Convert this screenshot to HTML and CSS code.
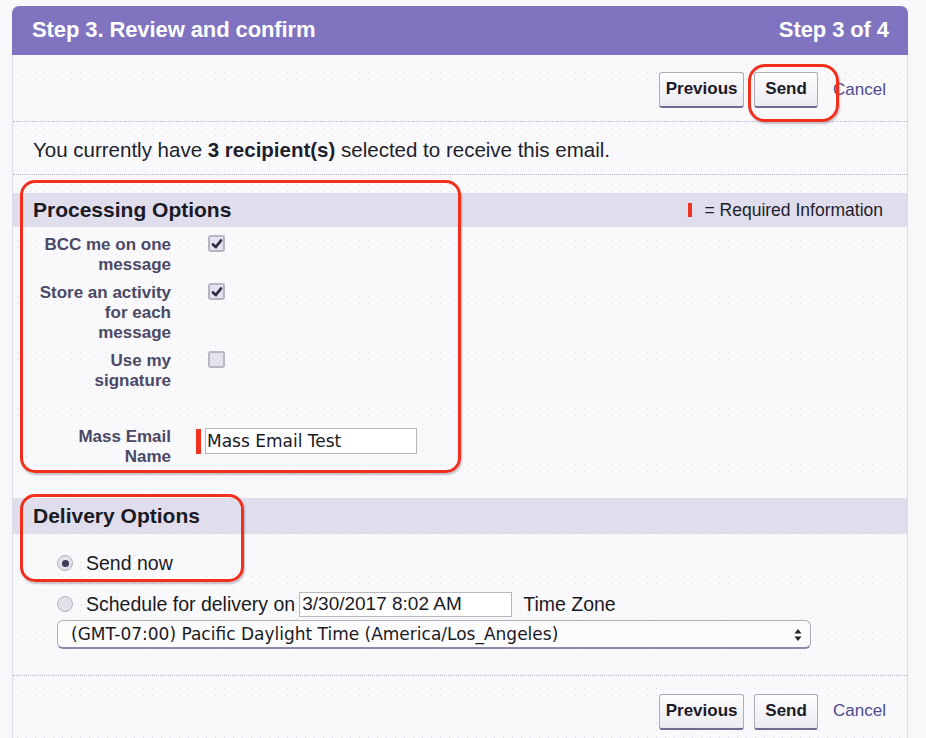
FILE: index.html
```html
<!DOCTYPE html>
<html>
<head>
<meta charset="utf-8">
<link rel="stylesheet" href="styles.css">
</head>
<body>
<div class="page">
  <div class="header">
    <h1 class="title">Step 3. Review and confirm</h1>
    <div class="step">Step 3 of 4</div>
  </div>
  <div class="panel">
    <div class="btn-row top">
      <button class="btn btn-prev">Previous</button>
      <button class="btn btn-send">Send</button>
      <a class="cancel">Cancel</a>
    </div>
    <div class="recipients"><span>You currently have <b>3 recipient(s)</b> selected to receive this email.</span></div>

    <div class="section-head first">
      <h2>Processing Options</h2>
      <div class="req"><span class="req-bar"></span> = Required Information</div>
    </div>
    <div class="form">
      <div class="row">
        <div class="label">BCC me on one message</div>
        <div class="value"><span class="cb checked"><svg viewBox="0 0 12 12" width="12" height="12"><path d="M2 6.5 L4.8 9 L10 2.5" fill="none" stroke="#2c2c44" stroke-width="2.8" stroke-linecap="round" stroke-linejoin="round"/></svg></span></div>
      </div>
      <div class="row">
        <div class="label">Store an activity for each message</div>
        <div class="value"><span class="cb checked"><svg viewBox="0 0 12 12" width="12" height="12"><path d="M2 6.5 L4.8 9 L10 2.5" fill="none" stroke="#2c2c44" stroke-width="2.8" stroke-linecap="round" stroke-linejoin="round"/></svg></span></div>
      </div>
      <div class="row">
        <div class="label">Use my<br>signature</div>
        <div class="value"><span class="cb"></span></div>
      </div>
      <div class="row name-row">
        <div class="label">Mass Email<br>Name</div>
        <div class="value req-value"><span class="req-mark"></span><input class="text-input name-input" type="text" value="Mass Email Test"></div>
      </div>
    </div>

    <div class="section-head second">
      <h2>Delivery Options</h2>
    </div>
    <div class="delivery">
      <div class="radio-row now">
        <span class="radio checked"></span><span class="radio-label">Send now</span>
      </div>
      <div class="radio-row sched">
        <span class="radio"></span><span class="radio-label">Schedule for delivery on</span>
        <input class="text-input date-input" type="text" value="3/30/2017 8:02 AM">
        <span class="radio-label tz">Time Zone</span>
      </div>
      <div class="select">
        <span>(GMT-07:00) Pacific Daylight Time (America/Los_Angeles)</span>
        <svg class="arrows" viewBox="0 0 8 14" width="8" height="14"><path d="M4 1 L7.5 5.5 H0.5 Z M4 13 L7.5 8.5 H0.5 Z" fill="#222"/></svg>
      </div>
    </div>

    <div class="btn-row bottom">
      <button class="btn btn-prev">Previous</button>
      <button class="btn btn-send">Send</button>
      <a class="cancel">Cancel</a>
    </div>
  </div>

  <div class="mark mark-proc"></div>
  <div class="mark mark-send"></div>
  <div class="mark mark-deliv"></div>
</div>
</body>
</html>
```

FILE: styles.css
```css
* { box-sizing: border-box; }
html, body {
  margin: 0;
  padding: 0;
  background: #f8f8fa;
  font-family: "Liberation Sans", Arial, sans-serif;
  color: #1e1e2c;
}
.page {
  position: relative;
  width: 896px;
  margin-left: 12px;
  padding-top: 6px;
  height: 738px;
  overflow: hidden;
}
.header {
  height: 49px;
  background: #8073c0;
  border-radius: 7px 7px 0 0;
  display: flex;
  align-items: center;
  justify-content: space-between;
  padding: 0 19px 1px 20px;
  color: #fff;
}
.title {
  margin: 0;
  font-size: 22px;
  font-weight: bold;
  letter-spacing: -0.1px;
}
.step {
  font-size: 22px;
  font-weight: bold;
  letter-spacing: -0.1px;
}
.panel {
  border-left: 1px solid #dddbe8;
  border-right: 1px solid #dddbe8;
  height: 700px;
  background-color: #f9f9fb;
  background-image: radial-gradient(circle, #dfdfec 0.7px, transparent 0.9px);
  background-size: 9px 7px;
}
.btn-row {
  display: flex;
  justify-content: flex-end;
  align-items: center;
  padding-right: 21px;
}
.btn-row.top {
  height: 67px;
  border-bottom: 1px dotted #b8b6c8;
  padding-top: 3px;
}
.btn-row.bottom {
  border-top: 1px dotted #b8b6c8;
  margin-top: 26px;
  height: 72px;
  padding-top: 0px;
}
.btn {
  font-family: "Liberation Sans", Arial, sans-serif;
  font-size: 17px;
  font-weight: bold;
  color: #1a1a26;
  height: 36px;
  border: 1px solid #aeacb8;
  border-bottom: 2px solid #6e6c94;
  border-radius: 3px;
  background: linear-gradient(#fdfdfe, #ebebf0);
  padding: 0;
  margin-left: 10px;
}
.btn-prev { width: 85px; }
.btn-send { width: 64px; }
.cancel {
  font-size: 17px;
  color: #4e4a8e;
  margin-left: 15px;
  margin-top: 0px;
}
.btn-row.bottom .cancel { margin-top: -1px; }
.recipients {
  height: 53px;
  display: flex;
  align-items: center;
  padding-left: 20px;
  font-size: 20.5px;
  border-bottom: 1px dotted #b8b6c8;
  padding-top: 3px;
}
.recipients b { font-weight: bold; }
.section-head {
  background: #e0dded;
  display: flex;
  align-items: center;
  justify-content: space-between;
  padding: 0 24px 0 20px;
}
.section-head.first {
  margin-top: 18px;
  height: 34px;
}
.section-head.second {
  margin-top: 31px;
  height: 36px;
}
.section-head h2 {
  margin: 0;
  font-size: 21px;
  font-weight: bold;
  color: #1a1a24;
}
.req {
  font-size: 17.5px;
  display: flex;
  align-items: center;
  color: #1e1e2c;
}
.req-bar {
  display: inline-block;
  width: 4px;
  height: 14px;
  background: #f0331f;
  margin-right: 12px;
}
.form {
  padding-top: 8px;
}
.row {
  display: flex;
  align-items: flex-start;
  margin-bottom: 8px;
}
.row.name-row { margin-top: 36px; margin-bottom: 0; }
.label {
  width: 158px;
  text-align: right;
  font-size: 17px;
  font-weight: bold;
  line-height: 20px;
  color: #4a4966;
  padding-left: 19px;
}
.value {
  padding-left: 37px;
  padding-top: 0px;
}
.cb {
  display: flex;
  align-items: center;
  justify-content: center;
  width: 17px;
  height: 17px;
  border: 2px solid #b8b6c0;
  border-radius: 3px;
  background: #e4e2ee;
}
.req-value {
  padding-left: 25px;
  display: flex;
  align-items: flex-start;
  padding-top: 1px;
}
.req-mark {
  width: 5px;
  height: 25px;
  background: #f0331f;
  margin-right: 4px;
  margin-top: 1px;
}
.text-input {
  font-family: "DejaVu Sans", "Liberation Sans", sans-serif;
  font-size: 17px;
  color: #1a1a24;
  background: #fff;
  border: 1px solid #b8b8bc;
  padding: 0 6px;
  margin: 0;
}
.name-input {
  width: 212px;
  height: 26px;
  padding-left: 1px;
}
.delivery {
  padding-left: 44px;
}
.radio-row {
  display: flex;
  align-items: center;
}
.radio-row.now { margin-top: 19px; height: 20px; }
.radio-row.sched { margin-top: 19px; height: 24px; }
.radio {
  width: 16px;
  height: 16px;
  border-radius: 50%;
  border: 1px solid #b4b2bc;
  background: #e2e1e9;
  margin-right: 13px;
  display: flex;
  align-items: center;
  justify-content: center;
}
.radio.checked::after {
  content: "";
  width: 7px;
  height: 7px;
  border-radius: 50%;
  background: #3c3c56;
}
.radio-label {
  font-size: 19.5px;
  color: #1a1a24;
}
.date-input {
  font-family: "Liberation Sans", Arial, sans-serif;
  font-size: 19px;
  width: 213px;
  height: 25px;
  margin-left: 4px;
  padding-left: 2px;
}
.tz { margin-left: 11px; }
.select {
  margin-top: 4px;
  margin-left: 0px;
  width: 754px;
  height: 29px;
  border: 1px solid #b0aeb8;
  border-bottom: 2px solid #8c8aa8;
  border-radius: 6px;
  background: #fbfbfc;
  display: flex;
  align-items: center;
  justify-content: space-between;
  padding: 0 8px 0 13px;
  font-family: "DejaVu Sans", "Liberation Sans", sans-serif;
  font-size: 17px;
  color: #1a1a24;
}
.arrows { margin-top: 1px; }
.mark {
  position: absolute;
  border: 3px solid #f0301c;
  border-radius: 15px;
  box-shadow: 1px 2px 2px rgba(90, 80, 100, 0.35);
}
.mark-proc { left: 8px; top: 180px; width: 441px; height: 293px; }
.mark-send { left: 736px; top: 64px; width: 91px; height: 58px; border-radius: 17px; }
.mark-deliv { left: 8px; top: 494px; width: 224px; height: 88px; }
```
